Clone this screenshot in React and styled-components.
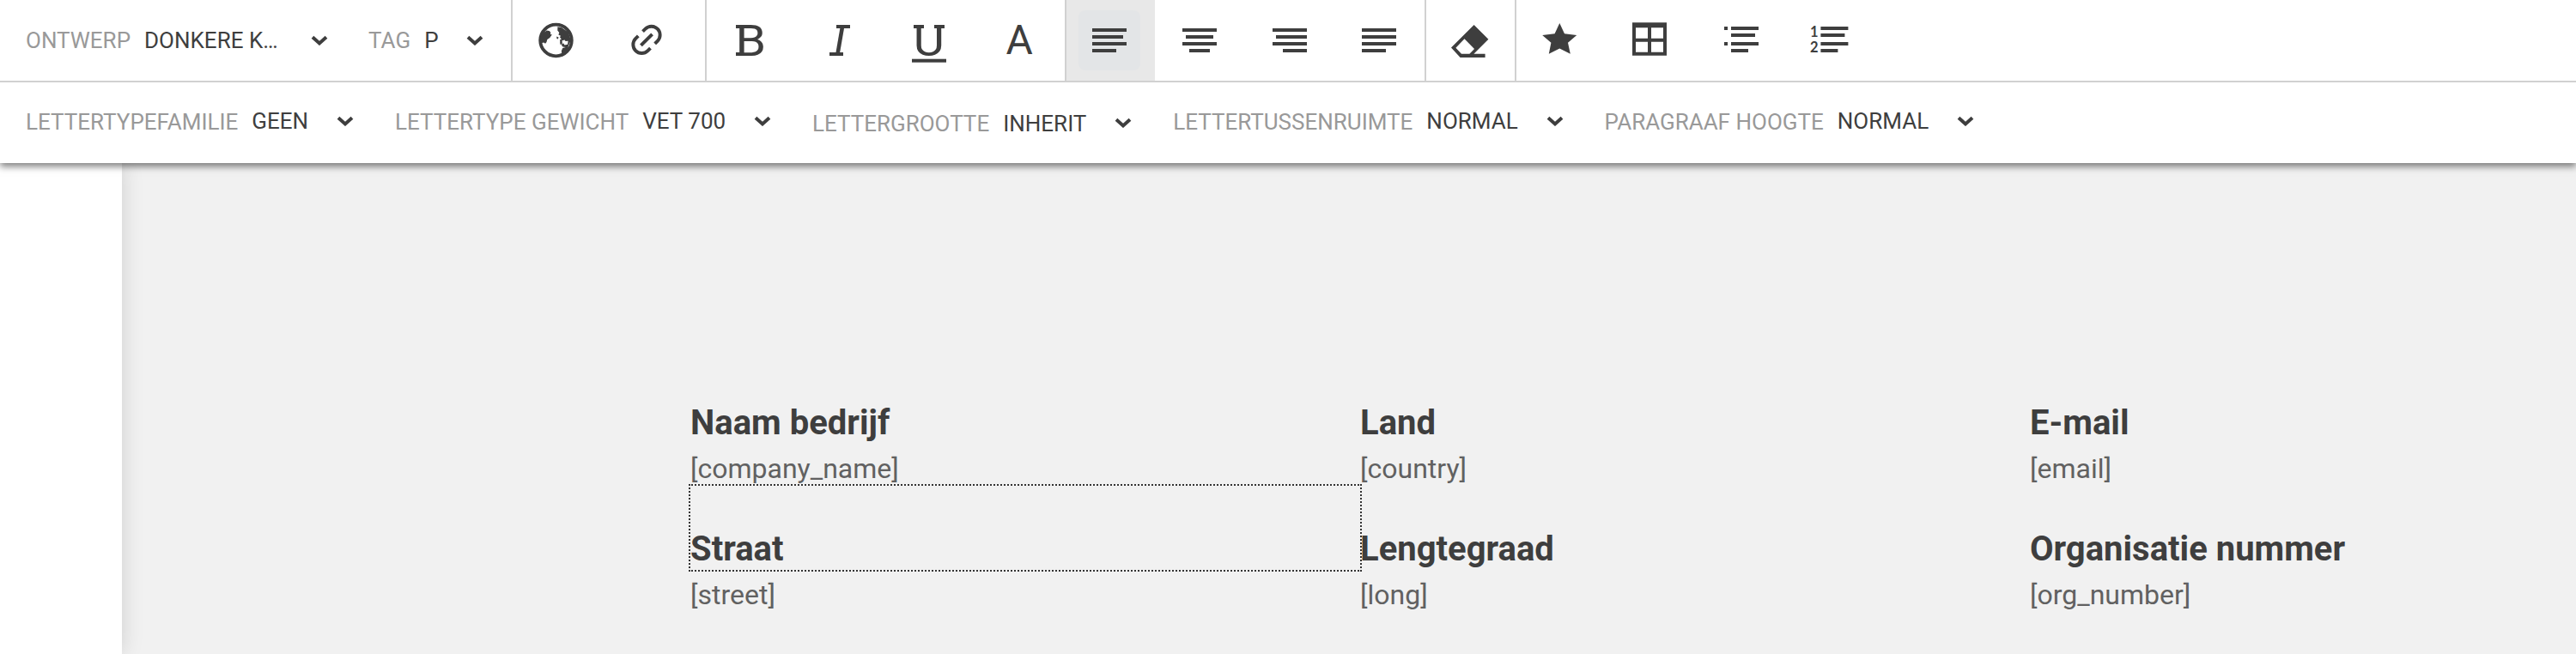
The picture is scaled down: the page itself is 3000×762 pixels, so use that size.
import React from "react";
import styled, { createGlobalStyle, css } from "styled-components";

const styleFields = [
    { label: "ONTWERP", value: "DONKERE K…", gap: 38 },
    { label: "TAG", value: "P", gap: 32 },
];

const fontFields = [
    { label: "LETTERTYPEFAMILIE", value: "GEEN" },
    { label: "LETTERTYPE GEWICHT", value: "VET 700" },
    { label: "LETTERGROOTTE", value: "INHERIT", low: true },
    { label: "LETTERTUSSENRUIMTE", value: "NORMAL" },
    { label: "PARAGRAAF HOOGTE", value: "NORMAL" },
];

const columns = [
    [
        { title: "Naam bedrijf", text: "[company_name]" },
        { title: "Straat", text: "[street]", selected: true },
    ],
    [
        { title: "Land", text: "[country]" },
        { title: "Lengtegraad", text: "[long]" },
    ],
    [
        { title: "E-mail", text: "[email]" },
        { title: "Organisatie nummer", text: "[org_number]" },
    ],
];

// every line is [x, y, width]
const Lines = ({ rows, children }) => (
    <Icon viewBox="0 0 48 48">
        {rows.map(([x, y, w], i) => (
            <rect key={i} x={x} y={y} width={w} height="4" />
        ))}
        {children}
    </Icon>
);

// the letters get their slab serifs from the lines
const BoldIcon = () => (
    <Lines rows={[[8, 6, 6], [8, 38, 6]]}>
        <Glyph transform="translate(7.6 42) scale(1.13 1)">B</Glyph>
    </Lines>
);

const ItalicIcon = () => (
    <Lines rows={[[20, 6, 16], [12, 38, 16]]}>
        <Glyph $italic transform="translate(17 42)">I</Glyph>
    </Lines>
);

const UnderlineIcon = () => (
    <Lines rows={[[6, 6, 12], [30, 6, 12], [4, 45.7, 40]]}>
        <Glyph transform="translate(5.8 41.6) scale(1.1 1)">U</Glyph>
    </Lines>
);

const GlobeIcon = () => (
    <Icon viewBox="0 0 48 48">
        <circle cx="24.5" cy="24" r="18.3" fill="none" stroke="#3e3e3e" strokeWidth="3.8" />
        <path d="M9 14.6l3-.6 1.4-1.4 3.4.5 1.6 1.8-.5 2 2 .4-2.6 3.6-3 2.2-.8 3-1.4 1.6-2-1.2-4.1 1.2-.6-6z" />
        <path d="M26.4 8.2l4.5.8 8 5.5 3 9.5-2.4 5.2-.8 2.2.6 3.4-4 5.4-3 2.1-1-2.1-.4-4 1.4-3.2 3.4-.9-3.2-.5-1.4-1.6.5-2.8-2 .6-.6-4.2 1.8-.8-1.8-2.6 1-1.4-2.6-1.4.9-2.4-2-2.6z" />
        <path d="M25.2 19.6l2.4 1-.8 2-1.4-.6z" />
        <path d="M31.6 24.2l3-.8 1 1.6 3-.2-.5 4-3.6.8-1.2-2-1.6.5z" fill="#fff" />
        <path d="M29.4 26l1.8-.4.3 3-2 .4z" />
    </Icon>
);

const LinkIcon = () => (
    <Icon viewBox="0 0 48 48">
        <g transform="translate(25 23.4) rotate(-45)" fill="none" stroke="#3e3e3e" strokeWidth="3.9">
            <path d="M3.7-10H8A10 10 0 0 1 8 10H3.7" />
            <path d="M-3.7-10H-8A10 10 0 0 0-8 10H-3.7" />
            <path d="M-9.3 0H9.3" />
        </g>
    </Icon>
);

const EraserIcon = () => (
    <Icon viewBox="0 0 48 48">
        <path
            fillRule="evenodd"
            d="M29.6 6L46.4 22.7 29.4 39.8H42.6V44H13.6L3 32.5zM18.5 22.3L8.4 32.8 15 39.8H24.4L30 34z"
        />
    </Icon>
);

const StarIcon = () => (
    <Icon viewBox="0 0 48 48">
        <path d="M24.3 4L30 16.3 44.2 18 34 26.7 36.8 39.8 24.3 33.6 11.8 39.8 14.4 26.7 4.2 18 18.6 16.3z" />
    </Icon>
);

const TableIcon = () => (
    <Icon viewBox="0 0 48 48">
        <path
            fillRule="evenodd"
            d="M4 3.3H44V41.7H4zM8 9.3V21.7H22V9.3zM26 9.3V21.7H40V9.3zM8 25.7V37.7H22V25.7zM26 25.7V37.7H40V25.7z"
        />
    </Icon>
);

const BulletListIcon = () => (
    <Lines rows={[[6, 8, 4], [14, 8, 32], [14, 16, 28], [6, 26, 4], [14, 26, 32], [14, 34, 20]]} />
);

const NumberListIcon = () => (
    <Lines rows={[[14.4, 8, 32], [14.4, 16, 28], [14.4, 26, 32], [14.4, 34, 20]]}>
        <Digit x="2" y="20">1</Digit>
        <Digit x="2" y="38">2</Digit>
    </Lines>
);

const Select = ({ label, value, low, gap = 33, raised }) => (
    <Field $low={low} $raised={raised}>
        <Label>{label}</Label>
        <Value $gap={gap} $raised={raised && !low}>{value}</Value>
        <Arrow viewBox="0 0 20 12" $raised={raised}>
            <path d="M2 2.2L10 9.4 18 2.2" />
        </Arrow>
    </Field>
);

const App = () => (
    <Page>
        <GlobalStyle />
        <Toolbar>
            <Row $border>
                <Fields $width={595}>
                    {styleFields.map((f) => <Select key={f.label} {...f} />)}
                </Fields>
                <Group $wide>
                    <Tool><GlobeIcon /></Tool>
                    <Tool><LinkIcon /></Tool>
                </Group>
                <Group>
                    <Tool><BoldIcon /></Tool>
                    <Tool><ItalicIcon /></Tool>
                    <Tool><UnderlineIcon /></Tool>
                    <Tool><Letter>A</Letter></Tool>
                </Group>
                <Group>
                    <Tool $active>
                        <Lines rows={[[4, 10, 40], [4, 18, 36], [4, 26, 40], [4, 34, 28]]} />
                    </Tool>
                    <Tool><Lines rows={[[4, 10, 40], [8, 18, 32], [4, 26, 40], [12, 34, 24]]} /></Tool>
                    <Tool><Lines rows={[[4, 10, 40], [8, 18, 36], [4, 26, 40], [16, 34, 28]]} /></Tool>
                    <Tool><Lines rows={[[4, 10, 40], [4, 18, 40], [4, 26, 40], [4, 34, 28]]} /></Tool>
                </Group>
                <Group>
                    <Tool><EraserIcon /></Tool>
                </Group>
                <Group>
                    <Tool><StarIcon /></Tool>
                    <Tool><TableIcon /></Tool>
                    <Tool><BulletListIcon /></Tool>
                    <Tool><NumberListIcon /></Tool>
                </Group>
            </Row>
            <Row>
                <Fields>
                    {fontFields.map((f) => <Select key={f.label} raised {...f} />)}
                </Fields>
            </Row>
        </Toolbar>
        <Body>
            <Side />
            <Canvas>
                {columns.map((items, i) => (
                    <Column key={i}>
                        {items.map((item) => (
                            <div key={item.title}>
                                <Title $selected={item.selected}>{item.title}</Title>
                                <Text>{item.text}</Text>
                            </div>
                        ))}
                    </Column>
                ))}
            </Canvas>
        </Body>
    </Page>
);

const GlobalStyle = createGlobalStyle`
    body {
        margin: 0;
        background: #ffffff;
        overflow: hidden;
    }
`;

const Page = styled.div`
    display: flex;
    flex-direction: column;
    width: 3000px;
    height: 762px;
    overflow: hidden;
    font-family: Roboto, sans-serif;
    color: #3e3e3e;
`;

const Toolbar = styled.div`
    position: relative;
    z-index: 1;
    flex: none;
    background: #ffffff;
    box-shadow: 0 4px 8px rgba(0, 0, 0, 0.5);
`;

const Row = styled.div`
    display: flex;
    height: 94px;
    ${props => props.$border && css`
        border-bottom: 2px solid #d1d1d1;
    `}
`;

const Fields = styled.div`
    display: flex;
    gap: 47.8px;
    box-sizing: border-box;
    padding-left: 30px;
    ${props => props.$width && css`
        width: ${props.$width}px;
        gap: 47.5px;
    `}
`;

const Field = styled.div`
    display: flex;
    align-items: center;
    height: 94px;
    box-sizing: border-box;
    font-size: 26px;
    line-height: 30px;
    white-space: nowrap;
    ${props => props.$raised && css`
        padding-bottom: 2px;
    `}
    ${props => props.$low && css`
        padding-top: 4px;
    `}
`;

const Label = styled.span`
    color: #999999;
    margin-right: 16px;
`;

const Value = styled.span`
    margin-right: ${props => props.$gap}px;
    ${props => props.$raised && css`
        padding-bottom: 2px;
    `}
`;

const Arrow = styled.svg`
    width: 20px;
    height: 12px;
    fill: none;
    stroke: #3e3e3e;
    stroke-width: 4;
    ${props => props.$raised && css`
        padding-bottom: 2px;
    `}
`;

const Group = styled.div`
    display: flex;
    box-shadow: inset 2px 0 0 #d1d1d1;
    ${props => props.$wide && css`
        padding-right: 16.4px;
    `}
`;

const Tool = styled.div`
    display: flex;
    align-items: center;
    justify-content: center;
    box-sizing: border-box;
    width: 104.8px;
    height: 94px;
    padding-right: 1px;
    ${props => props.$active && css`
        background:
            linear-gradient(#d1d1d1, #d1d1d1) 0 0 / 2px 100% no-repeat,
            #e8e8e8;

        > svg {
            padding: 11px 12px;
            border-radius: 8px;
            background: #e3e5e7;
        }
    `}
`;

const Icon = styled.svg`
    display: block;
    width: 48px;
    height: 48px;
    overflow: visible;
    fill: #3e3e3e;
`;

const Glyph = styled.text`
    font-size: 50.6px;
    font-style: ${props => props.$italic ? "italic" : "normal"};
`;

const Letter = styled.span`
    font-size: 48px;
    line-height: 48px;
`;

const Digit = styled.text`
    font-family: Lato, sans-serif;
    font-size: 16.5px;
    font-weight: 700;
`;

const Body = styled.div`
    display: flex;
    flex: 1;
`;

const Side = styled.div`
    flex: none;
    width: 142px;
    background: #ffffff;
    box-shadow: 0 0 24px rgba(0, 0, 0, 0.14);
    z-index: 0;
`;

const Canvas = styled.div`
    display: flex;
    flex: none;
    width: 2858px;
    box-sizing: border-box;
    padding: 229px 0 0 662px;
    background: #f1f1f1;
`;

const Column = styled.div`
    flex: none;
    width: 780px;
`;

const Title = styled.div`
    height: 98px;
    box-sizing: border-box;
    padding-top: 50px;
    font-size: 40px;
    font-weight: 700;
    line-height: 47px;
    ${props => props.$selected && css`
        outline: 2px dotted #333333;
    `}
`;

const Text = styled.div`
    padding-top: 9px;
    font-size: 32px;
    line-height: 40px;
    color: #616161;
`;

export default App;
